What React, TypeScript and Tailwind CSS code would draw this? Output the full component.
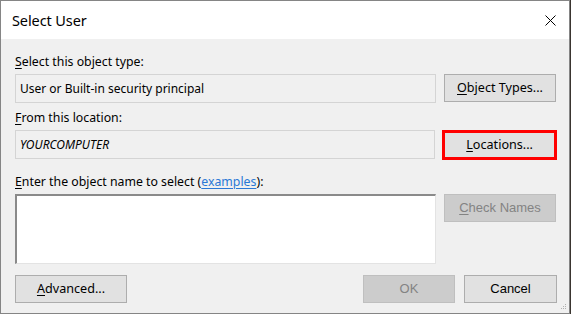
import React from "react";

const font = { fontFamily: '"Noto Sans", "Open Sans", sans-serif' };
const arial = { fontFamily: '"Liberation Sans", Arial, sans-serif' };

function U({ children }: { children: React.ReactNode }) {
  return <span className="underline underline-offset-2 decoration-1">{children}</span>;
}

function Btn({
  children,
  className = "",
  disabled = false,
  sans = false,
}: {
  children: React.ReactNode;
  className?: string;
  disabled?: boolean;
  sans?: boolean;
}) {
  return (
    <div
      className={
        "flex h-[28px] items-center justify-center border " +
        (sans ? "text-[13px] " : "text-[12.6px] ") +
        (disabled
          ? "border-[#bfbfbf] bg-[#cccccc] text-[#838383] "
          : "border-[#adadad] bg-[#e1e1e1] text-black ") +
        className
      }
      style={sans ? arial : undefined}
    >
      {children}
    </div>
  );
}

export default function App() {
  return (
    <div className="h-[314px] w-[571px] bg-[#3a3530]" style={font}>
      <div className="flex h-[314px] w-[570px] flex-col border border-[#858585] bg-[#f0f0f0]">
        {/* title bar */}
        <div className="flex h-[38px] shrink-0 items-center justify-between bg-white pl-[11px] pr-[13px]">
          <span className="text-[14.5px] leading-none tracking-[-0.1px] text-black">Select User</span>
          <svg width="11" height="11" viewBox="0 0 11 11" className="mt-[1px]">
            <path d="M0.5 0.5 L10.5 10.5 M10.5 0.5 L0.5 10.5" stroke="#000" strokeWidth="1" />
          </svg>
        </div>

        <div className="flex flex-1 flex-col pl-[14px] pr-[12px] text-[12px] text-black">
          {/* row 1 */}
          <div className="mt-[15px] h-[16px] text-[12.3px] leading-[16px]">
            <U>S</U>elect this object type:
          </div>
          <div className="mt-[4px] flex gap-[8px]">
            <div className="flex h-[29px] w-[421px] items-center border border-[#d4d4d4] pl-[4px] leading-none">
              User or Built-in security principal
            </div>
            <Btn className="w-[112px]">
              <span>
                <U>O</U>bject Types...
              </span>
            </Btn>
          </div>

          {/* row 2 */}
          <div className="mt-[7px] h-[16px] text-[12.3px] leading-[16px]">
            <U>F</U>rom this location:
          </div>
          <div className="mt-[4px] flex gap-[7px]">
            <div className="flex h-[29px] w-[421px] items-center border border-[#d4d4d4] pl-[4px] italic leading-none">
              YOURCOMPUTER
            </div>
            <div className="flex h-[30px] w-[115px] items-center justify-center border-[3px] border-[#ff0000] bg-[#e1e1e1] text-[12.6px]">
              <span>
                <U>L</U>ocations...
              </span>
            </div>
          </div>

          {/* row 3 */}
          <div className="mt-[14px] h-[16px] text-[12.3px] leading-[16px]">
            <U>E</U>nter the object name to select (
            <span className="text-[#2a78d6] underline underline-offset-2 decoration-1">examples</span>
            ):
          </div>
          <div className="mt-[4px] flex gap-[8px]">
            <div className="h-[70px] w-[421px] border-l-2 border-t-2 border-b border-r border-l-[#8a8a8a] border-t-[#8a8a8a] border-b-[#e3e3e3] border-r-[#e3e3e3] bg-white" />
            <Btn disabled sans className="w-[112px]">
              <span>
                <U>C</U>heck Names
              </span>
            </Btn>
          </div>

          {/* bottom */}
          <div className="mt-[11px] flex items-center">
            <Btn className="w-[112px]">
              <span>
                <U>A</U>dvanced...
              </span>
            </Btn>
            <div className="flex-1" />
            <Btn disabled sans className="w-[92px]">
              OK
            </Btn>
            <Btn sans className="ml-[9px] w-[93px]">
              Cancel
            </Btn>
          </div>
          <div className="relative flex-1">
            <svg width="9" height="9" viewBox="0 0 9 9" className="absolute bottom-[1px] right-[-10px]">
              <rect x="7" y="1" width="1" height="1" fill="#b0b0b0" />
              <rect x="5" y="3" width="1" height="1" fill="#b0b0b0" />
              <rect x="7" y="3" width="1" height="1" fill="#b0b0b0" />
              <rect x="3" y="5" width="1" height="1" fill="#b0b0b0" />
              <rect x="5" y="5" width="1" height="1" fill="#b0b0b0" />
              <rect x="7" y="5" width="1" height="1" fill="#b0b0b0" />
            </svg>
          </div>
        </div>
      </div>
    </div>
  );
}
